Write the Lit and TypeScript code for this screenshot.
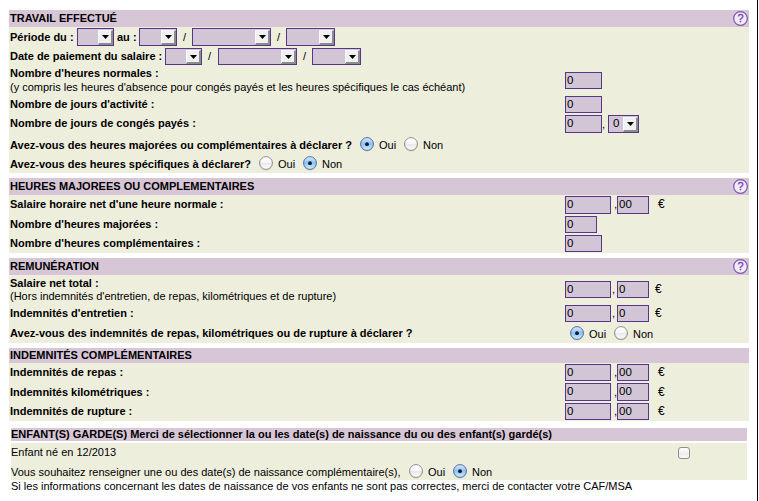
import { LitElement, html, css, svg, nothing, type TemplateResult } from "lit";
import { customElement, property } from "lit/decorators.js";
import { styleMap } from "lit/directives/style-map.js";

/** A cell of a form row: its width, the space above it, and its content. */
type Cell = [width: number, top: number, content: unknown];

@customElement("help-button")
class HelpButton extends LitElement {
  static styles = css`
    :host { display: block; width: 15px; height: 15px; }
    svg { display: block; }
    text { font: 11px "Liberation Sans", Arial, sans-serif; fill: #7040b4; stroke: #7040b4; stroke-width: .3px; }
  `;
  render() {
    return html`<svg width="15" height="15" viewBox="0 0 15 15">
      ${svg`<circle cx="7.5" cy="7.5" r="6.8" fill="#f3eaf8" stroke="#7d55b5" stroke-width="1.2"/>
      <text x="7.5" y="11.2" text-anchor="middle">?</text>`}
    </svg>`;
  }
}

@customElement("form-radio")
class FormRadio extends LitElement {
  @property({ type: Boolean }) checked = false;
  static styles = css`
    :host { display: block; width: 14px; height: 15px; }
    svg { display: block; overflow: visible; }
  `;
  render() {
    return html`<svg width="14" height="15" viewBox="0 0 14 15">
      <defs>
        <linearGradient id="off" x1="0" y1="0" x2="0" y2="1">
          <stop offset="0" stop-color="#ffffff" /><stop offset=".48" stop-color="#f6f6f6" />
          <stop offset=".52" stop-color="#e9e9e9" /><stop offset="1" stop-color="#fdfdfd" />
        </linearGradient>
        <linearGradient id="on" x1="0" y1="0" x2="0" y2="1">
          <stop offset="0" stop-color="#dcebfa" /><stop offset=".5" stop-color="#8fc0f1" />
          <stop offset="1" stop-color="#d2f1ff" />
        </linearGradient>
      </defs>
      <circle cx="7" cy="7.6" r="6.9" fill="#000" opacity=".12" />
      <circle cx="7" cy="7" r="6.4" fill=${this.checked ? "url(#on)" : "url(#off)"}
        stroke=${this.checked ? "#536fa6" : "#8f8f8f"} stroke-width="1" />
      ${this.checked ? svg`<circle cx="7" cy="7.2" r="1.9" fill="#0c1a2c"/>` : nothing}
    </svg>`;
  }
}

const EURO = html`<span class="euro">€</span>`;

const box = (width: number, value: string, height = 17) =>
  html`<div class="box" style=${styleMap({ width: `${width}px`, height: `${height}px` })}>${value}</div>`;

const select = (width: number, height = 18, value = "") =>
  html`<div class="box select" style=${styleMap({ width: `${width}px`, height: `${height}px` })}>
    <span class="value">${value}</span>
    <span class="arrow"><svg width="7" height="4" viewBox="0 0 7 4"><path d="M0 0H7L3.5 4Z" /></svg></span>
  </div>`;

const row = (height: number, cells: Cell[]): TemplateResult => html`<div
  class="row"
  style=${styleMap({ height: `${height}px`, gridTemplateColumns: cells.map((c) => `${c[0]}px`).join(" ") })}
>
  ${cells.map(([, top, content]) => html`<div class="cell" style=${styleMap({ paddingTop: `${top}px` })}>${content}</div>`)}
</div>`;

const bold = (text: string, spacing = "") => html`<b class=${spacing}>${text}</b>`;

const radios = (top: number, textTop: number, first: boolean): Cell[] => [
  [19, top, html`<form-radio ?checked=${first}></form-radio>`],
  [25, textTop, "Oui"],
  [19, top, html`<form-radio ?checked=${!first}></form-radio>`],
  [25, textTop, "Non"],
];

/** Whole part, comma, cents and currency sign. */
const cents = (textTop: number, height = 17): Cell[] => [
  [49, 1, box(46, "0", height)],
  [3, textTop, ","],
  [41, 1, box(32, "00", height)],
  [10, textTop, EURO],
];
const tenths = (top: number, textTop: number): Cell[] => [
  [47, top, box(46, "0")],
  [5, textTop, ","],
  [38, top, box(32, "0")],
  [10, textTop, EURO],
];

const FIELD = 555;

@customElement("app-root")
class AppRoot extends LitElement {
  static styles = css`
    :host {
      display: block; box-sizing: border-box; width: 758px; height: 501px; overflow: hidden;
      padding: 10px 8px 0 9px; border-right: 1px solid #000; background: #fff; color: #000;
      font: 11px/14px "Liberation Sans", Arial, sans-serif;
    }
    .section { margin-bottom: 5px; background: #eeeedd; }
    .head {
      display: flex; justify-content: space-between; box-sizing: border-box; height: 17px;
      padding: 1px 1px 0 1px; background: #d7c6d6; font-weight: bold; white-space: nowrap;
    }
    .head.plain { height: 15px; padding-top: 0; }
    .row { display: grid; padding-left: 1px; }
    .cell { min-width: 0; white-space: nowrap; }
    .tight { display: block; line-height: 12px; }
    .euro { display: block; font-size: 12px; line-height: 14px; }
    .box {
      display: block; box-sizing: border-box; padding-left: 1px; border: 1px solid #563787;
      background: #d2c6d6; font-size: 11.5px; line-height: 15px;
    }
    .select { display: flex; padding: 0; }
    .value { flex: 1; padding-left: 4px; line-height: 15px; }
    .arrow {
      display: flex; flex: none; align-items: center; justify-content: center; box-sizing: border-box;
      width: 15px; margin-top: 1px; background: #f0f0f0; border: 1px solid #fafafa;
      border-right: 2px solid #8c8c8c; border-bottom: 2px solid #8c8c8c;
    }
    .arrow svg { display: block; }
    .check {
      display: block; box-sizing: border-box; width: 12px; height: 12px; border: 1px solid #8e8e8e;
      border-radius: 3px; background: linear-gradient(#fff, #eee 60%, #fafafa);
    }
    .children { width: 736px; margin: 7px 0 0 2px; }
    .children .head { height: 13px; padding: 0; line-height: 13px; }
    .children .body { margin-top: 2px; height: 37px; background: #eeeedd; }
    .children .row { padding-left: 0; }
    .note { margin-top: -1px; white-space: nowrap; }
  `;

  render() {
    const slash = "/";
    return html`
      <div class="section">
        <div class="head"><span>TRAVAIL EFFECTUÉ</span><help-button></help-button></div>
        ${row(20, [
          [67, 3, bold("Période du :")], [40, 1, select(37)],
          [22, 3, bold("au :")], [44, 1, select(38)],
          [9, 3, slash], [85, 1, select(79)],
          [9, 3, slash], [49, 1, select(49)],
        ])}
        ${row(19, [
          [155, 2, bold("Date de paiement du salaire :")], [43, 1, select(37, 17)],
          [10, 2, slash], [85, 1, select(79, 17)],
          [9, 2, slash], [49, 1, select(49, 17)],
        ])}
        ${row(29, [
          [FIELD, 0, html`${bold("Nombre d'heures normales :")}<br />(y compris les heures d'absence pour congés payés et les heures spécifiques le cas échéant)`],
          [37, 6, box(37, "0")],
        ])}
        ${row(19, [[FIELD, 2, bold("Nombre de jours d'activité :")], [37, 1, box(37, "0")]])}
        ${row(20, [
          [FIELD, 2, bold("Nombre de jours de congés payés :")],
          [37, 1, box(37, "0", 18)], [6, 3, ","], [31, 1, select(31, 18, "0")],
        ])}
        ${row(20, [
          [350, 4, bold("Avez-vous des heures majorées ou complémentaires à déclarer ?")],
          ...radios(3, 4, true),
        ])}
        ${row(19, [
          [249, 3, bold("Avez-vous des heures spécifiques à déclarer?")],
          ...radios(2, 3, false),
        ])}
      </div>

      <div class="section">
        <div class="head"><span>HEURES MAJOREES OU COMPLEMENTAIRES</span><help-button></help-button></div>
        ${row(20, [[FIELD, 2, bold("Salaire horaire net d'une heure normale :")], ...cents(2, 18)])}
        ${row(19, [[FIELD, 2, bold("Nombre d'heures majorées :")], [32, 1, box(32, "0")]])}
        ${row(19, [[FIELD, 2, bold("Nombre d'heures complémentaires :")], [37, 1, box(37, "0")]])}
      </div>

      <div class="section">
        <div class="head"><span>REMUNÉRATION</span><help-button></help-button></div>
        ${row(28, [
          [FIELD, 2, html`${bold("Salaire net total :", "tight")}(Hors indemnités d'entretien, de repas, kilométriques et de rupture)`],
          ...tenths(6, 7),
        ])}
        ${row(20, [[FIELD, 3, bold("Indemnités d'entretien :")], ...tenths(2, 3)])}
        ${row(20, [
          [560, 3, bold("Avez-vous des indemnités de repas, kilométriques ou de rupture à déclarer ?")],
          ...radios(3, 4, true),
        ])}
      </div>

      <div class="section">
        <div class="head plain"><span>INDEMNITÉS COMPLÉMENTAIRES</span></div>
        ${row(19, [[FIELD, 2, bold("Indemnités de repas :")], ...cents(2)])}
        ${row(20, [[FIELD, 3, bold("Indemnités kilométriques :")], ...cents(3, 18)])}
        ${row(19, [[FIELD, 2, bold("Indemnités de rupture :")], ...cents(2)])}
      </div>

      <div class="children">
        <div class="head">ENFANT(S) GARDE(S) Merci de sélectionner la ou les date(s) de naissance du ou des enfant(s) gardé(s)</div>
        <div class="body">
          ${row(20, [[667, 2, "Enfant né en 12/2013"], [12, 4, html`<span class="check"></span>`]])}
          ${row(17, [
            [398, 2, "Vous souhaitez renseigner une ou des date(s) de naissance complémentaire(s),"],
            ...radios(1, 2, false),
          ])}
        </div>
        <div class="note">Si les informations concernant les dates de naissance de vos enfants ne sont pas correctes, merci de contacter votre CAF/MSA</div>
      </div>
    `;
  }
}
